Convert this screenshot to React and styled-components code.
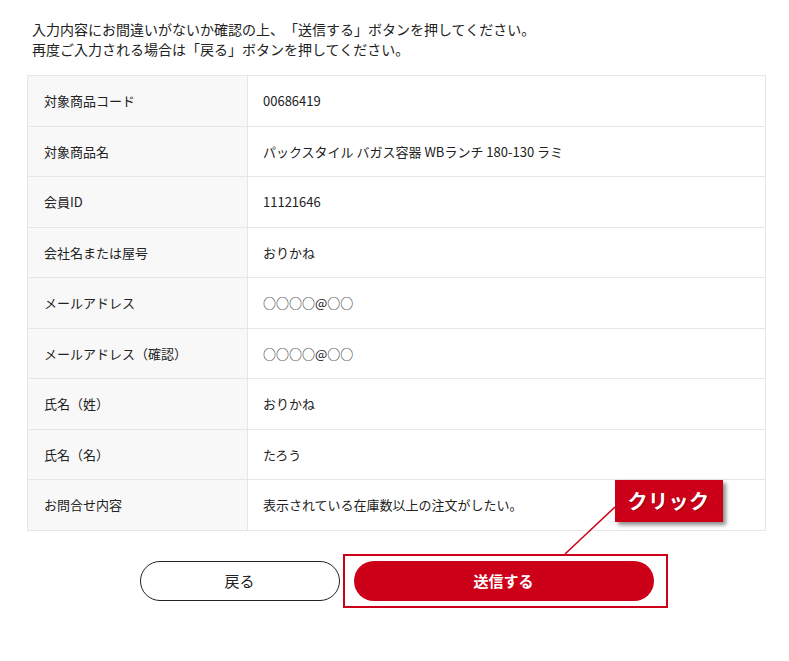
import styled, { createGlobalStyle } from "styled-components";

const RED = "#cc0018";

const rows = [
  ["対象商品コード", "00686419"],
  ["対象商品名", "パックスタイル バガス容器 WBランチ 180-130 ラミ"],
  ["会員ID", "11121646"],
  ["会社名または屋号", "おりかね"],
  ["メールアドレス", "○○○○@○○"],
  ["メールアドレス（確認）", "○○○○@○○"],
  ["氏名（姓）", "おりかね"],
  ["氏名（名）", "たろう"],
  ["お問合せ内容", "表示されている在庫数以上の注文がしたい。"],
];

const GlobalStyle = createGlobalStyle`
  body {
    margin: 0;
    background: #fff;
    color: #222;
    font-family: "Noto Sans CJK JP", "Noto Sans", sans-serif;
    text-spacing-trim: space-all;
  }
`;

const Page = styled.div`
  width: 789px;
  height: 661px;
  padding: 19px 23px 0 27px;
  box-sizing: border-box;
`;

const Intro = styled.p`
  margin: 0 0 16px 5px;
  font-size: 14px;
  line-height: 20px;
`;

const Table = styled.table`
  width: 739px;
  border-collapse: collapse;
  font-size: 13px;
`;

const Row = styled.tr`
  height: 50.5px;
`;

const Label = styled.th`
  width: 220px;
  padding: 0 0 0 16px;
  text-align: left;
  font-weight: normal;
  background: #f8f8f8;
  border: 1px solid #e6e6e6;
  box-sizing: border-box;
`;

const Value = styled.td`
  padding: 0 0 0 15px;
  border: 1px solid #e6e6e6;
`;

const Actions = styled.div`
  display: flex;
  justify-content: center;
  gap: 14px;
  margin-top: 30px;
`;

const Button = styled.button`
  height: 40px;
  border-radius: 20px;
  font-family: inherit;
  font-size: 15px;
  box-sizing: border-box;
  cursor: pointer;
`;

const BackButton = styled(Button)`
  width: 200px;
  background: #fff;
  color: #222;
  border: 1px solid #222;
`;

const SubmitButton = styled(Button)`
  width: 300px;
  background: ${RED};
  color: #fff;
  border: none;
  font-weight: bold;
`;

const SubmitWrap = styled.div`
  position: relative;
`;

const Highlight = styled.div`
  position: absolute;
  top: -7px;
  bottom: -7px;
  left: -11px;
  right: -14px;
  border: 2px solid ${RED};
  pointer-events: none;
`;

const Leader = styled.svg`
  position: absolute;
  left: 211px;
  top: -54px;
  overflow: visible;
`;

const Callout = styled.div`
  position: absolute;
  left: 261px;
  top: -81px;
  width: 108px;
  height: 42px;
  display: flex;
  align-items: center;
  justify-content: center;
  background: ${RED};
  color: #fff;
  font-size: 20px;
  font-weight: bold;
  letter-spacing: 0.5px;
  text-shadow: 1px 1px 1px rgba(0, 0, 0, 0.25);
  box-shadow: 3px 3px 4px rgba(0, 0, 0, 0.45);
`;

export default function App() {
  return (
    <>
      <GlobalStyle />
      <Page>
        <Intro>
          入力内容にお間違いがないか確認の上、「送信する」ボタンを押してください。
          <br />
          再度ご入力される場合は「戻る」ボタンを押してください。
        </Intro>
        <Table>
          <tbody>
            {rows.map(([label, value]) => (
              <Row key={label}>
                <Label>{label}</Label>
                <Value>{value}</Value>
              </Row>
            ))}
          </tbody>
        </Table>
        <Actions>
          <BackButton>戻る</BackButton>
          <SubmitWrap>
            <SubmitButton>送信する</SubmitButton>
            <Highlight />
            <Leader width="50" height="47">
              <line x1="0" y1="47" x2="50" y2="0" stroke={RED} strokeWidth="1.5" />
            </Leader>
            <Callout>クリック</Callout>
          </SubmitWrap>
        </Actions>
      </Page>
    </>
  );
}
